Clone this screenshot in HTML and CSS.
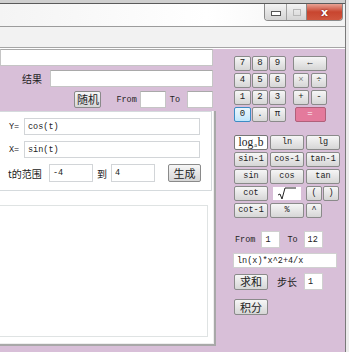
FILE: index.html
```html
<!DOCTYPE html>
<html lang="zh">
<head>
    <meta charset="UTF-8">
    <title>计算器</title>
    <link rel="stylesheet" href="styles.css">
</head>
<body>
    <div class="window">
        <!-- Barra de título con botones -->
        <div class="titlebar">
            <div class="caps">
                <span class="cap cap-min"><i></i></span>
                <span class="cap cap-max"><i></i></span>
                <span class="cap cap-close">x</span>
            </div>
        </div>
        <div class="menubar"></div>
        <div class="client">
            <div class="main">
                <input class="box box-expr" type="text">
                <div class="row row-result">
                    <span class="lbl lbl-result">结果</span>
                    <input class="box box-result" type="text">
                </div>
                <div class="row row-rand">
                    <button class="btn btn-rand">随机</button>
                    <span class="mono lbl-from">From</span>
                    <input class="box box-small" type="text">
                    <span class="mono lbl-to">To</span>
                    <input class="box box-small" type="text">
                </div>
                <div class="panel">
                    <div class="group">
                        <div class="grow">
                            <span class="mono glbl">Y=</span>
                            <input class="box box-fn mono" type="text" value="cos(t)">
                        </div>
                        <div class="grow">
                            <span class="mono glbl">X=</span>
                            <input class="box box-fn mono" type="text" value="sin(t)">
                        </div>
                        <div class="grow grow-range">
                            <span class="lbl lbl-range">t的范围</span>
                            <input class="box box-range mono" type="text" value="-4">
                            <span class="lbl lbl-dao">到</span>
                            <input class="box box-range mono" type="text" value="4">
                            <button class="btn btn-gen">生成</button>
                        </div>
                    </div>
                    <div class="chart"></div>
                </div>
            </div>
            <div class="side">
                <div class="keys">
                    <div class="numpad">
                        <button class="btn key">7</button>
                        <button class="btn key">8</button>
                        <button class="btn key">9</button>
                        <button class="btn key">4</button>
                        <button class="btn key">5</button>
                        <button class="btn key">6</button>
                        <button class="btn key">1</button>
                        <button class="btn key">2</button>
                        <button class="btn key">3</button>
                        <button class="btn key key-focus">0</button>
                        <button class="btn key">.</button>
                        <button class="btn key">π</button>
                    </div>
                    <div class="ops">
                        <button class="btn key key-wide">←</button>
                        <button class="btn key key-grey">×</button>
                        <button class="btn key">÷</button>
                        <button class="btn key">+</button>
                        <button class="btn key">-</button>
                        <button class="btn key key-eq">=</button>
                    </div>
                </div>
                <div class="sci">
                    <button class="btn fn fn-log">log<sub>a</sub>b</button>
                    <button class="btn fn">ln</button>
                    <button class="btn fn">lg</button>
                    <button class="btn fn">sin-1</button>
                    <button class="btn fn">cos-1</button>
                    <button class="btn fn">tan-1</button>
                    <button class="btn fn">sin</button>
                    <button class="btn fn">cos</button>
                    <button class="btn fn">tan</button>
                    <button class="btn fn">cot</button>
                    <div class="sqrt">
                        <svg width="20" height="13" viewBox="0 0 20 13">
                            <path d="M1 8 L3 7 L5 12 L8 1 L19 1" fill="none" stroke="#222" stroke-width="1"/>
                        </svg>
                    </div>
                    <div class="paren">
                        <button class="btn fn">(</button>
                        <button class="btn fn">)</button>
                    </div>
                    <button class="btn fn">cot-1</button>
                    <button class="btn fn">%</button>
                    <div class="paren">
                        <button class="btn fn">^</button>
                    </div>
                </div>
                <div class="srow srow-range">
                    <span class="mono">From</span>
                    <input class="box box-tiny mono" type="text" value="1">
                    <span class="mono lbl-to2">To</span>
                    <input class="box box-tiny mono" type="text" value="12">
                </div>
                <input class="box box-formula mono" type="text" value="ln(x)*x^2+4/x">
                <div class="srow srow-sum">
                    <button class="btn btn-act">求和</button>
                    <span class="lbl lbl-step">步长</span>
                    <input class="box box-tiny mono" type="text" value="1">
                </div>
                <div class="srow srow-int">
                    <button class="btn btn-act">积分</button>
                </div>
            </div>
        </div>
    </div>
</body>
</html>
```
FILE: styles.css
```css
/* Ventana estilo Windows 7 */
body {
    margin: 0;
    width: 349px;
    height: 352px;
    overflow: hidden;
    background: #ececec;
    font-family: "Noto Sans CJK SC", sans-serif;
}

.window {
    width: 345px;
    height: 352px;
    border-right: 1px solid #7a7a7a;
    background: thistle;
}

.titlebar {
    height: 23px;
    border-top: 3px solid #cfcfcf;
    border-bottom: 1px solid #9c9c9c;
    box-shadow: inset 0 1px 0 #5a5a5a;
    background: linear-gradient(to right, #f4f4f4, #ffffff 60%, #f2f2f2);
    display: flex;
    justify-content: flex-end;
}

.caps {
    display: flex;
    height: 16px;
    margin-top: 1px;
    margin-right: 2px;
    border: 1px solid #8a8a8a;
    border-top: none;
    border-radius: 0 0 4px 4px;
    overflow: hidden;
}

.cap {
    display: flex;
    align-items: center;
    justify-content: center;
    background: linear-gradient(#f3f3f3, #d4d4d4);
}

.cap-min {
    width: 21px;
    border-right: 1px solid #a0a0a0;
}

.cap-min i {
    width: 8px;
    height: 3px;
    margin-top: 3px;
    border: 1px solid #555;
    background: #fff;
}

.cap-max {
    width: 19px;
    border-right: 1px solid #8a8a8a;
}

.cap-max i {
    width: 6px;
    height: 5px;
    border: 1px solid #b8b8b8;
}

.cap-close {
    width: 35px;
    background: linear-gradient(#e8a294, #c8452f 50%, #d0563e);
    color: #fff;
    font: bold 11px "DejaVu Sans", sans-serif;
    text-shadow: 0 0 2px #600;
}

.menubar {
    height: 20px;
    background: #f2f2f2;
    border-bottom: 1px solid #a6a6a6;
    box-shadow: 0 1px 0 #fff;
}

.client {
    display: flex;
    height: 303px;
}

.main {
    width: 216px;
    flex-shrink: 0;
    padding-top: 1px;
}

.mono {
    font-family: "Liberation Mono", monospace;
    font-size: 8.5px;
    color: #222;
}

.lbl {
    font-size: 10px;
    color: #222;
    flex-shrink: 0;
}

.box {
    box-sizing: border-box;
    height: 17px;
    min-width: 0;
    margin: 0;
    padding: 0 3px;
    border: 1px solid #c5c5c5;
    border-top-color: #a9a9a9;
    background: #fff;
    outline: none;
}

.box-expr {
    display: block;
    width: 213px;
}

.row {
    display: flex;
    align-items: center;
    width: 213px;
    margin-top: 4px;
}

.lbl-result {
    width: 42px;
    text-align: right;
    margin-right: 8px;
}

.box-result {
    flex: 1;
}

.row-rand {
    justify-content: flex-end;
}

.lbl-from {
    margin: 0 3px 0 15px;
}

.lbl-to {
    margin: 0 7px 0 4px;
}

.box-small {
    width: 26px;
}

.btn {
    box-sizing: border-box;
    margin: 0;
    padding: 0;
    border: 1px solid #8a8a8a;
    border-radius: 2px;
    background: linear-gradient(#f6f6f6, #e6e6e6 50%, #d6d6d6);
    color: #222;
    font-family: "Liberation Mono", "Noto Sans CJK SC", monospace;
    font-size: 8.5px;
    line-height: 1;
}

.btn-rand {
    width: 27px;
    height: 17px;
    font-size: 11px;
    font-family: "Noto Sans CJK SC", sans-serif;
}

/* Panel blanco con el grupo y el gráfico */
.panel {
    margin-top: 3px;
    height: 233px;
    background: #fff;
    border-right: 2px solid #a8a8a8;
    border-bottom: 2px solid #a8a8a8;
    box-shadow: inset -1px -1px 0 #eee;
}

.group {
    width: 212px;
    height: 80px;
    box-sizing: border-box;
    border: 1px solid #d5dadd;
    border-left: none;
    padding-top: 6px;
}

.grow {
    display: flex;
    align-items: center;
    height: 17px;
    margin-bottom: 6px;
}

.glbl {
    width: 15px;
    margin-left: 9px;
}

.box-fn {
    width: 176px;
    border-color: #d2d5d8;
    font-size: 8.5px;
}

.grow-range {
    height: 18px;
    margin-top: 1px;
}

.lbl-range {
    margin-left: 8px;
    width: 41px;
}

.box-range {
    width: 44px;
    height: 18px;
    border-color: #d2d5d8;
}

.lbl-dao {
    width: 18px;
    text-align: center;
}

.btn-gen {
    width: 33px;
    height: 18px;
    margin-left: 13px;
    font-size: 11px;
    font-family: "Noto Sans CJK SC", sans-serif;
}

.chart {
    width: 208px;
    height: 132px;
    margin-top: 14px;
    box-sizing: border-box;
    border: 1px solid #dfe3e3;
    border-left: none;
}

/* Columna derecha: teclado */
.side {
    padding: 8px 0 0 18px;
}

.keys {
    display: flex;
    gap: 7px;
}

.numpad {
    display: grid;
    grid-template-columns: 17px 16px 17px;
    grid-auto-rows: 15px;
    gap: 2px 1px;
}

.ops {
    display: grid;
    grid-template-columns: 16px 16px;
    grid-auto-rows: 15px;
    gap: 2px 2px;
}

.key {
    font-size: 9px;
}

.key-wide {
    grid-column: span 2;
}

.key-grey {
    color: #888;
}

.key-focus {
    border-color: #3c8cc4;
    background: linear-gradient(#eaf6fd, #d9effc 50%, #bee6fd);
}

.key-eq {
    grid-column: span 2;
    width: 31px;
    justify-self: center;
    border-color: #b0607a;
    background: #e47a9c;
    color: #fff;
}

.sci {
    display: grid;
    grid-template-columns: 34px 34px 34px;
    grid-auto-rows: 15px;
    gap: 2px 2px;
    margin-top: 13px;
}

.fn {
    font-size: 8.5px;
}

.fn-log {
    background: #fff;
    border-color: #777;
    font-family: "Liberation Serif", serif;
    font-size: 11.5px;
}

.fn-log sub {
    font-size: 6px;
    vertical-align: -1px;
    margin: 0 1px;
}

.sqrt {
    display: flex;
    align-items: center;
    justify-content: center;
    margin: 1px 3px;
    background: #fff;
}

.paren {
    display: flex;
    gap: 1px;
}

.paren .btn {
    width: 16px;
}

.srow {
    display: flex;
    align-items: center;
}

.srow-range {
    margin-top: 13px;
    padding-left: 1px;
}

.srow-range .box-tiny:first-of-type {
    margin-left: 6px;
}

.lbl-to2 {
    margin: 0 6px 0 7px;
}

.box-tiny {
    width: 19px;
    height: 17px;
    border-color: #d0d0d0;
}

.box-formula {
    display: block;
    width: 104px;
    height: 15px;
    margin-top: 5px;
    margin-left: -1px;
    border-color: #d0d0d0;
}

.srow-sum {
    margin-top: 5px;
}

.btn-act {
    width: 34px;
    height: 16px;
    font-size: 11px;
    font-family: "Noto Sans CJK SC", sans-serif;
}

.lbl-step {
    margin: 0 7px 0 9px;
}

.srow-int {
    margin-top: 9px;
}
```
